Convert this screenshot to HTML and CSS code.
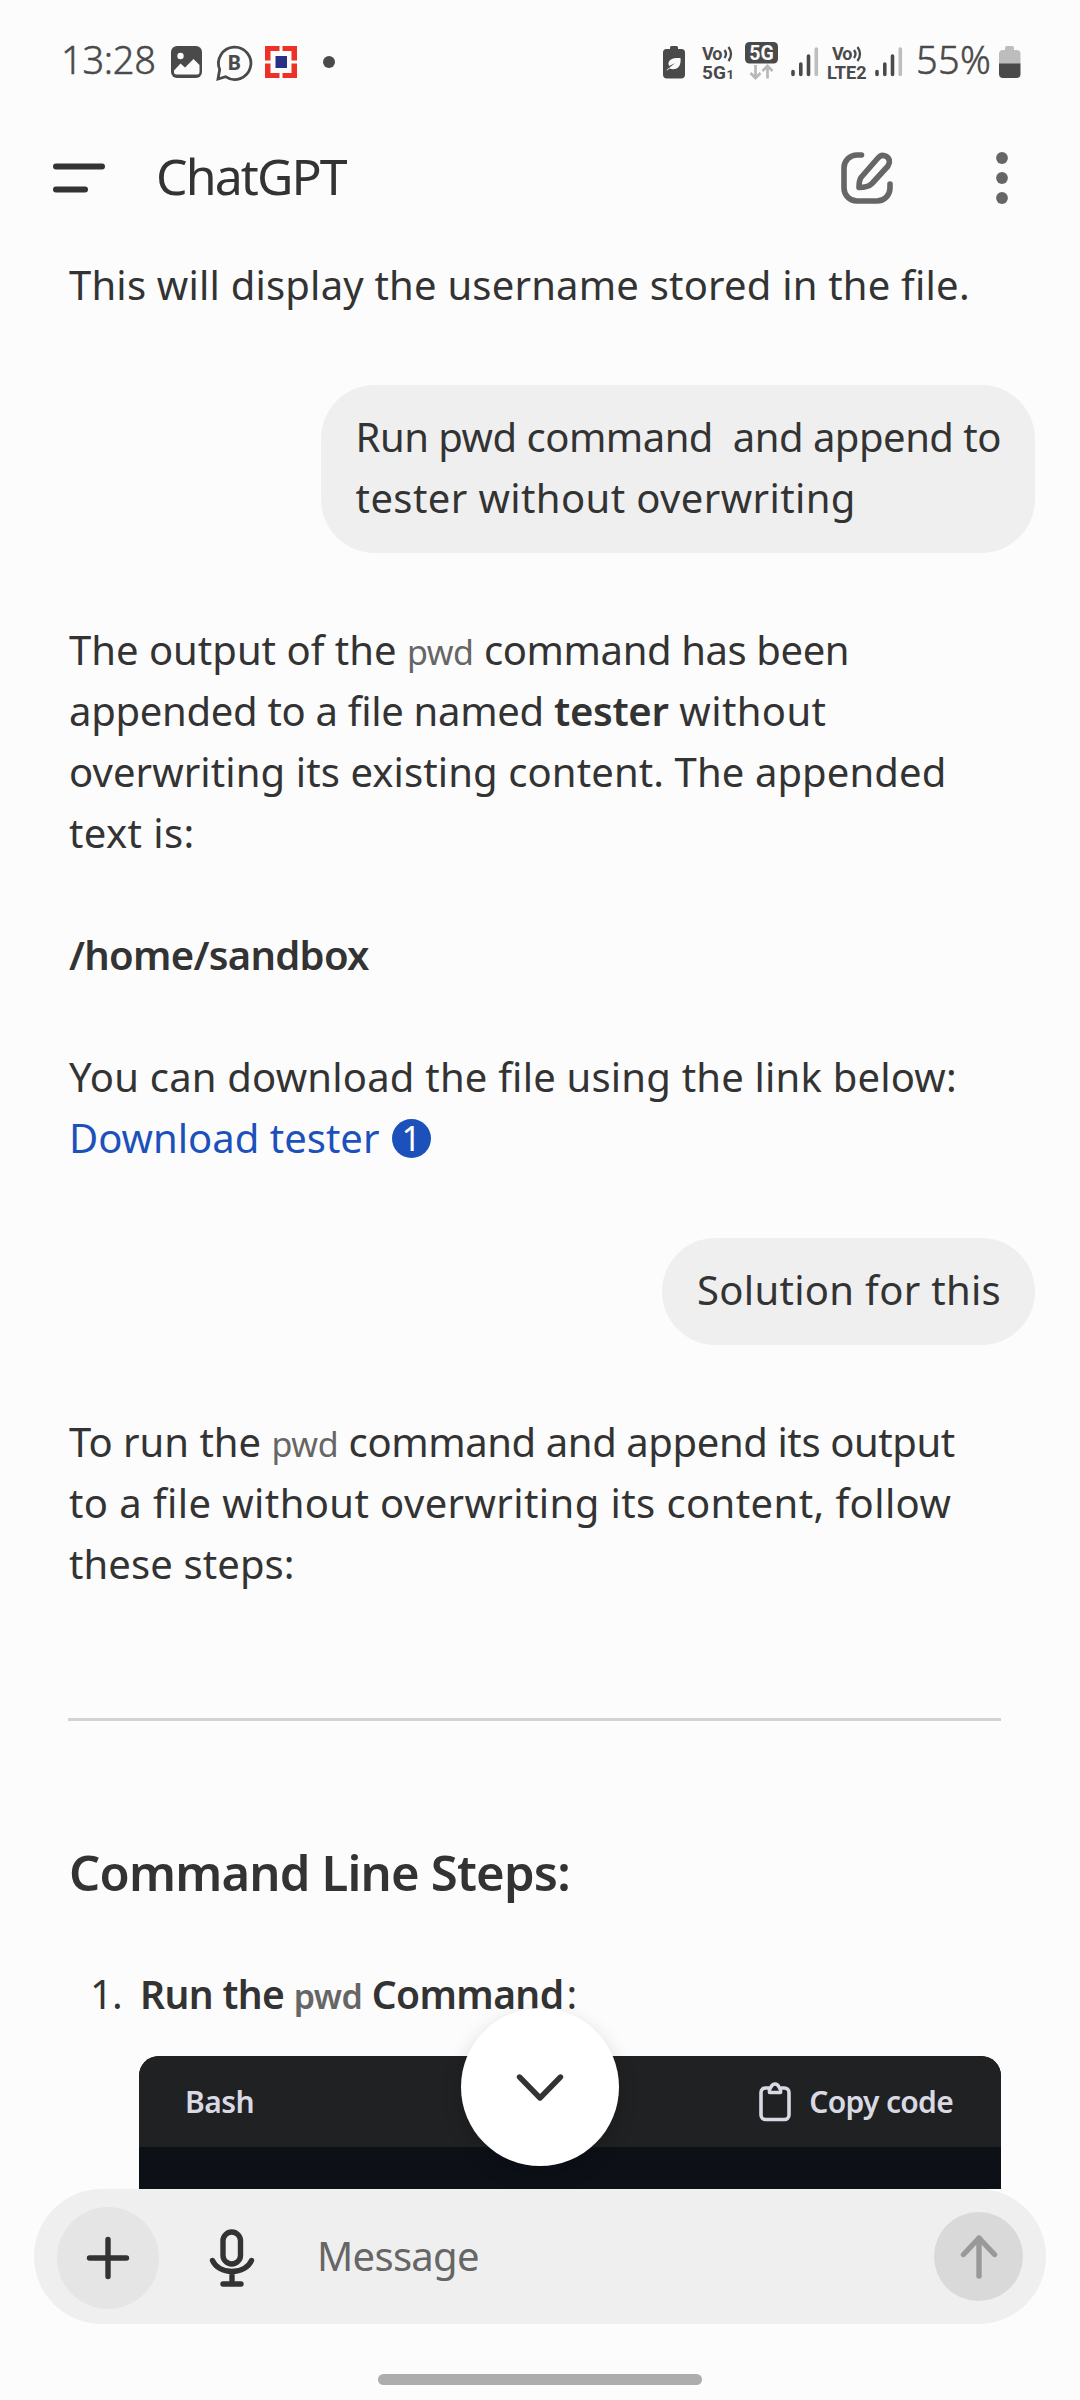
FILE: index.html
```html
<!DOCTYPE html>
<html lang="en">
<head>
<meta charset="utf-8">
<title>ChatGPT</title>
<link rel="stylesheet" href="styles.css">
</head>
<body>
<div class="status">
  <span class="clock">13:28</span>
  <svg class="ic-photo" width="31" height="32" viewBox="0 0 31 32"><rect width="31" height="32" rx="6" fill="#4a4a4a"/><circle cx="9.500" cy="10" r="3.200" fill="#fcfcfc"/><path d="M3 24.500 9.500 17.500l4.500 4L22.500 13l6 6V26a2.500 2.500 0 0 1-2.500 2.500H5.500A2.500 2.500 0 0 1 3 26z" fill="#fcfcfc"/></svg>
  <svg class="ic-biz" width="36" height="37" viewBox="0 0 36 37"><path d="M3.700 25.500A16.200 16.200 0 1 1 9.500 32.700L2 35z" fill="none" stroke="#4a4a4a" stroke-width="2.800"/><text x="18.500" y="25.500" text-anchor="middle" font-family="Roboto, sans-serif" font-weight="800" font-size="20" fill="#4a4a4a">B</text></svg>
  <svg class="ic-bank" width="32" height="32" viewBox="0 0 32 32"><path d="M0 0h14.500v5H5.500v9.500H0zM17.500 0H32v14.500h-5.500V5h-9zM0 17.500h5.500V27h9v5H0zM26.500 17.500H32V32H17.500v-5h9z" fill="#ee3126"/><rect x="10.500" y="10" width="11.500" height="12" fill="#2b3087"/></svg>
  <i class="dot"></i>
  <svg class="ic-saver" width="22" height="33" viewBox="0 0 22 33"><path d="M7 1.500Q7 0 8.500 0h5Q15 0 15 1.500V3h3.500A3.500 3.500 0 0 1 22 6.500v22a4 4 0 0 1-4 4H4a4 4 0 0 1-4-4v-22A3.500 3.500 0 0 1 3.500 3H7z" fill="#4a4a4a"/><path d="M17.500 12C10 11.500 5.500 13.500 5.500 17.500q0 1.500.7 2.500l6-3-8.700 7 .5.500 2.500-2C13 24.500 18.500 22 17.500 12z" fill="#fcfcfc"/></svg>
  <svg class="ic-vo1" width="34" height="35" viewBox="0 0 34 35"><g fill="#4a4a4a" font-family="Roboto, sans-serif" font-weight="700"><text x="0" y="15" font-size="18" textLength="20.500">Vo</text><text x="0" y="33.500" font-size="19" textLength="24">5G</text><text x="24.500" y="33.500" font-size="13">1</text></g><path d="M22.500 5q3 4 0 8M26.500 2q5 7 0 14" fill="none" stroke="#4a4a4a" stroke-width="2.300"/></svg>
  <svg class="ic-5g" width="34" height="38" viewBox="0 0 34 38"><rect width="33" height="21.500" rx="4.500" fill="#4a4a4a"/><text x="16.500" y="17.500" text-anchor="middle" font-family="Roboto, sans-serif" font-weight="700" font-size="19.500" fill="#fcfcfc">5G</text><path d="M10.500 23v13M5.500 31l5 5 5-5M22.500 36.500V24M17.500 29l5-5 5 5" fill="none" stroke="#b8b8b8" stroke-width="2.700"/></svg>
  <svg class="ic-sig1" width="28" height="30" viewBox="0 0 28 30"><g stroke-width="3.600" stroke-linecap="round"><path d="M2 24.500v3M9.800 17v10.500M17.500 9v18.500" stroke="#4a4a4a"/><path d="M25.300 2v25.500" stroke="#bdbdbd"/></g></svg>
  <svg class="ic-vo2" width="40" height="35" viewBox="0 0 40 35"><g fill="#4a4a4a" font-family="Roboto, sans-serif" font-weight="700"><text x="5" y="15" font-size="18" textLength="20.500">Vo</text><text x="0" y="33.500" font-size="19" textLength="39.500" lengthAdjust="spacingAndGlyphs">LTE2</text></g><path d="M27 5q3 4 0 8M30.500 2q5 7 0 14" fill="none" stroke="#4a4a4a" stroke-width="2.300"/></svg>
  <svg class="ic-sig2" width="28" height="30" viewBox="0 0 28 30"><g stroke-width="3.600" stroke-linecap="round"><path d="M2 24.500v3M9.800 17v10.500M17.500 9v18.500" stroke="#4a4a4a"/><path d="M25.300 2v25.500" stroke="#bdbdbd"/></g></svg>
  <span class="percent">55%</span>
  <svg class="ic-batt" width="22" height="32" viewBox="0 0 22 32"><path d="M6 2Q6 0 8 0h5q2 0 2 2v2h2.500A4 4 0 0 1 21.500 8v10H0V8A4 4 0 0 1 4 4h2z" fill="#bdbdbd"/><path d="M0 17.500h21.500V28a4 4 0 0 1-4 4H4a4 4 0 0 1-4-4z" fill="#4a4a4a"/></svg>
</div>

<header class="topbar">
  <svg class="menu" width="52" height="30" viewBox="0 0 52 30"><path d="M3 3.500h46M3 26.500h29" stroke="#333" stroke-width="6" stroke-linecap="round"/></svg>
  <h1>ChatGPT</h1>
  <svg class="compose" width="52" height="52" viewBox="0 0 52 52" fill="none" stroke="#666" stroke-width="5.600" stroke-linecap="round" stroke-linejoin="round"><path d="M20.500 3H16A13 13 0 0 0 3 16V36A13 13 0 0 0 16 49H36A13 13 0 0 0 49 36V32"/><path d="M18 35.500Q18 28.500 20 25.500L37 6Q40.500 1.500 45.500 4.500T47 14L31 31.500Q27 35.500 18 35.500z"/></svg>
  <svg class="more" width="12" height="52" viewBox="0 0 12 52" fill="#666"><circle cx="6" cy="6" r="5.900"/><circle cx="6" cy="26" r="5.900"/><circle cx="6" cy="46" r="5.900"/></svg>
</header>

<main class="chat">
  <p class="ls-p2">This will display the username stored in the file.</p>

  <div class="bubble"><span class="ls-m5">Run pwd command&nbsp; and append to</span><br><span class="ls-p4">tester without overwriting</span></div>

  <div class="answer">
    <p>The output of the <code>pwd</code> <span class="ls-m4">command has been</span><br><span class="ls-m3">appended to a file named <b>tester</b></span><span class="ls-p4"> without</span><br><span class="ls-p1">overwriting its existing content. The appended</span><br><span class="ls-p4">text is:</span></p>
    <p class="ls-m7"><b>/home/sandbox</b></p>
    <p><span class="ls-p2">You can download the file using the link below:</span><br><a class="link" href="#">Download tester <span class="cite">1</span></a></p>
  </div>

  <div class="bubble"><span class="ls-p3">Solution for this</span></div>

  <div class="answer">
    <p>To run the <code>pwd</code> <span class="ls-m4">command and append its output</span><br><span class="ls-p4">to a file without overwriting its content, follow</span><br><span class="ls-p1">these steps:</span></p>
    <hr>
    <h2>Command Line Steps:</h2>
    <ol>
      <li><span class="num">1.</span><b>Run the <code>pwd</code> Command</b><span class="colon">:</span></li>
    </ol>
    <div class="codeblock">
      <div class="codehead">
        <span class="lang">Bash</span>
        <span class="copy"><svg width="32" height="40" viewBox="0 0 32 40" fill="none" stroke="#d9d9e3" stroke-width="3.600" stroke-linejoin="round"><path d="M10.500 6H6.500A4.500 4.500 0 0 0 2 10.500V33A4.500 4.500 0 0 0 6.500 37.500h19A4.500 4.500 0 0 0 30 33V10.500A4.500 4.500 0 0 0 25.500 6H21.500"/><path d="M10.500 10.500V7.500Q11.500 6 12 5Q13.500 2 16 2T20 5Q20.500 6 21.500 7.500V10.500z"/></svg><span>Copy code</span></span>
      </div>
    </div>
  </div>

  <div class="to-end"><svg width="48" height="30" viewBox="0 0 48 30"><path d="M3.500 5 24 26 44.500 5" fill="none" stroke="#333" stroke-width="5.400" stroke-linecap="round" stroke-linejoin="round"/></svg></div>
</main>

<div class="composer">
  <div class="add"><svg width="44" height="44" viewBox="0 0 44 44"><path d="M22 3.500v37M3.500 22h37" stroke="#333" stroke-width="5.400" stroke-linecap="round"/></svg></div>
  <svg class="mic" width="46" height="58" viewBox="0 0 46 58" fill="none" stroke="#333" stroke-width="5.400" stroke-linecap="round"><rect x="14" y="3" width="17.500" height="32" rx="8.750"/><path d="M3.500 31.500a20.500 16 0 0 0 39 0M23 46v9M14 55h18"/></svg>
  <span class="hint">Message</span>
  <div class="send"><svg width="38" height="46" viewBox="0 0 38 46"><path d="M19 42V4M3.500 20.500 19 4 34.500 20.500" fill="none" stroke="#999" stroke-width="5.400" stroke-linecap="round" stroke-linejoin="round"/></svg></div>
</div>
<div class="navbar"><i></i></div>
</body>
</html>
```
FILE: styles.css
```css
* { box-sizing: border-box; }

body {
  margin: 0;
  width: 1080px;
  height: 2400px;
  display: flex;
  flex-direction: column;
  overflow: hidden;
  background: #fcfcfc;
  color: #333;
  font: 400 40px/61px "Noto Sans", sans-serif;
}

p, h1, h2, ol { margin: 0; padding: 0; }
svg { display: block; flex: none; overflow: visible; }
b { font-weight: 600; }

/* status bar */
.status {
  flex: none;
  height: 124px;
  display: flex;
  align-items: center;
  padding-left: 61px;
  color: #4a4a4a;
  font-size: 38px;
}
.clock, .percent { font-weight: 300; -webkit-text-stroke: .5px #4a4a4a; }
.clock { width: 110px; margin-top: -5px; letter-spacing: -.3px; }
.ic-photo { margin-right: 14px; }
.ic-biz { margin-right: 13px; }
.ic-bank { margin-right: 26px; }
.dot { width: 12px; height: 12px; border-radius: 50%; background: #4a4a4a; }
.ic-saver { margin-left: 328px; }
.ic-vo1 { margin-left: 17px; }
.ic-5g { margin-left: 9px; margin-top: -3px; }
.ic-sig1 { margin-left: 12px; }
.ic-vo2 { margin-left: 8px; }
.ic-sig2 { margin-left: 8px; }
.percent { width: 83px; margin: -5px 0 0 13px; letter-spacing: .3px; }

/* app bar */
.topbar {
  flex: none;
  height: 108px;
  display: flex;
  align-items: center;
  padding: 0 72px 0 53px;
}
.topbar h1 {
  flex: 1;
  margin: -4px 0 0 51px;
  font-size: 50px;
  font-weight: 400;
  letter-spacing: -1.9px;
}
.compose { margin-right: 103px; }

/* conversation */
.chat {
  position: relative;
  flex: 1;
  min-height: 0;
  overflow: hidden;
  padding: 22px 45px 0 69px;
  display: flex;
  flex-direction: column;
  white-space: nowrap;
}
.bubble {
  align-self: flex-end;
  margin: 70px 0 66px;
  padding: 21px 34px 25px 35px;
  border-radius: 54px;
  background: #efefef;
}
.answer p + p { margin-top: 61px; }
.answer code { font: inherit; font-size: 34px; letter-spacing: -.4px; line-height: 1; color: #666; }
.link { color: #1c51bb; text-decoration: none; }
.cite {
  display: inline-block;
  width: 39px;
  height: 39px;
  margin-left: 2px;
  border-radius: 50%;
  background: #1c51bb;
  color: #fff;
  font-size: 34px;
  line-height: 38px;
  text-align: center;
  vertical-align: 2px;
  vertical-align: top;
  margin-top: 12px;
}

hr {
  width: 933px;
  height: 3px;
  margin: 124px 0 0 -1px;
  border: 0;
  background: #d3d3d3;
}
h2 {
  margin-top: 121px;
  font-size: 49px;
  font-weight: 600;
  letter-spacing: -.8px;
}
ol { margin-top: 60px; list-style: none; }
li { display: flex; white-space: pre; }
li b { font-size: 39px; letter-spacing: -.6px; }
.answer li code { letter-spacing: -.6px; }
.num { width: 71px; padding-left: 21px; letter-spacing: -1px; }
.colon { margin-left: 3px; }

.codeblock {
  width: 862px;
  height: 200px;
  margin: 32px 0 0 70px;
  border-radius: 20px;
  background: #0d1017;
  overflow: hidden;
}
.codehead {
  height: 91px;
  display: flex;
  align-items: center;
  justify-content: space-between;
  padding: 0 48px 0 46px;
  background: #202123;
  color: #d9d9e3;
  font-size: 30px;
  font-weight: 600;
}
.lang { letter-spacing: -.5px; }
.copy { display: flex; align-items: center; gap: 18px; }
.copy span { letter-spacing: -.7px; }

/* per-line tracking */
.ls-p4 { letter-spacing: .4px; }
.ls-p3 { letter-spacing: .3px; }
.ls-p2 { letter-spacing: .2px; }
.ls-p1 { letter-spacing: .1px; }
.ls-m3 { letter-spacing: -.3px; }
.ls-m4 { letter-spacing: -.4px; }
.ls-m5 { letter-spacing: -.5px; }
.ls-m7 { letter-spacing: -.7px; }

.to-end {
  position: absolute;
  left: 461px;
  bottom: 23px;
  width: 158px;
  height: 158px;
  display: flex;
  align-items: center;
  justify-content: center;
  border-radius: 50%;
  background: #fff;
  box-shadow: 0 8px 20px rgba(0, 0, 0, .18);
}

/* message box */
.composer {
  flex: none;
  height: 135px;
  margin: 0 34px;
  padding: 0 23px;
  display: flex;
  align-items: center;
  border-radius: 68px;
  background: #efefef;
}
.add, .send {
  display: flex;
  align-items: center;
  justify-content: center;
  border-radius: 50%;
}
.add { width: 102px; height: 102px; margin-top: 3px; background: #e5e5e5; }
.mic { margin: 3px 0 0 50px; }
.hint { flex: 1; margin: -3px 0 0 62px; color: #666; letter-spacing: -.7px; }
.send { width: 89px; height: 89px; background: #d9d9d9; }

.navbar { flex: none; height: 76px; padding-top: 50px; }
.navbar i { display: block; width: 324px; height: 11px; margin: 0 auto; border-radius: 6px; background: #adadad; }
```
